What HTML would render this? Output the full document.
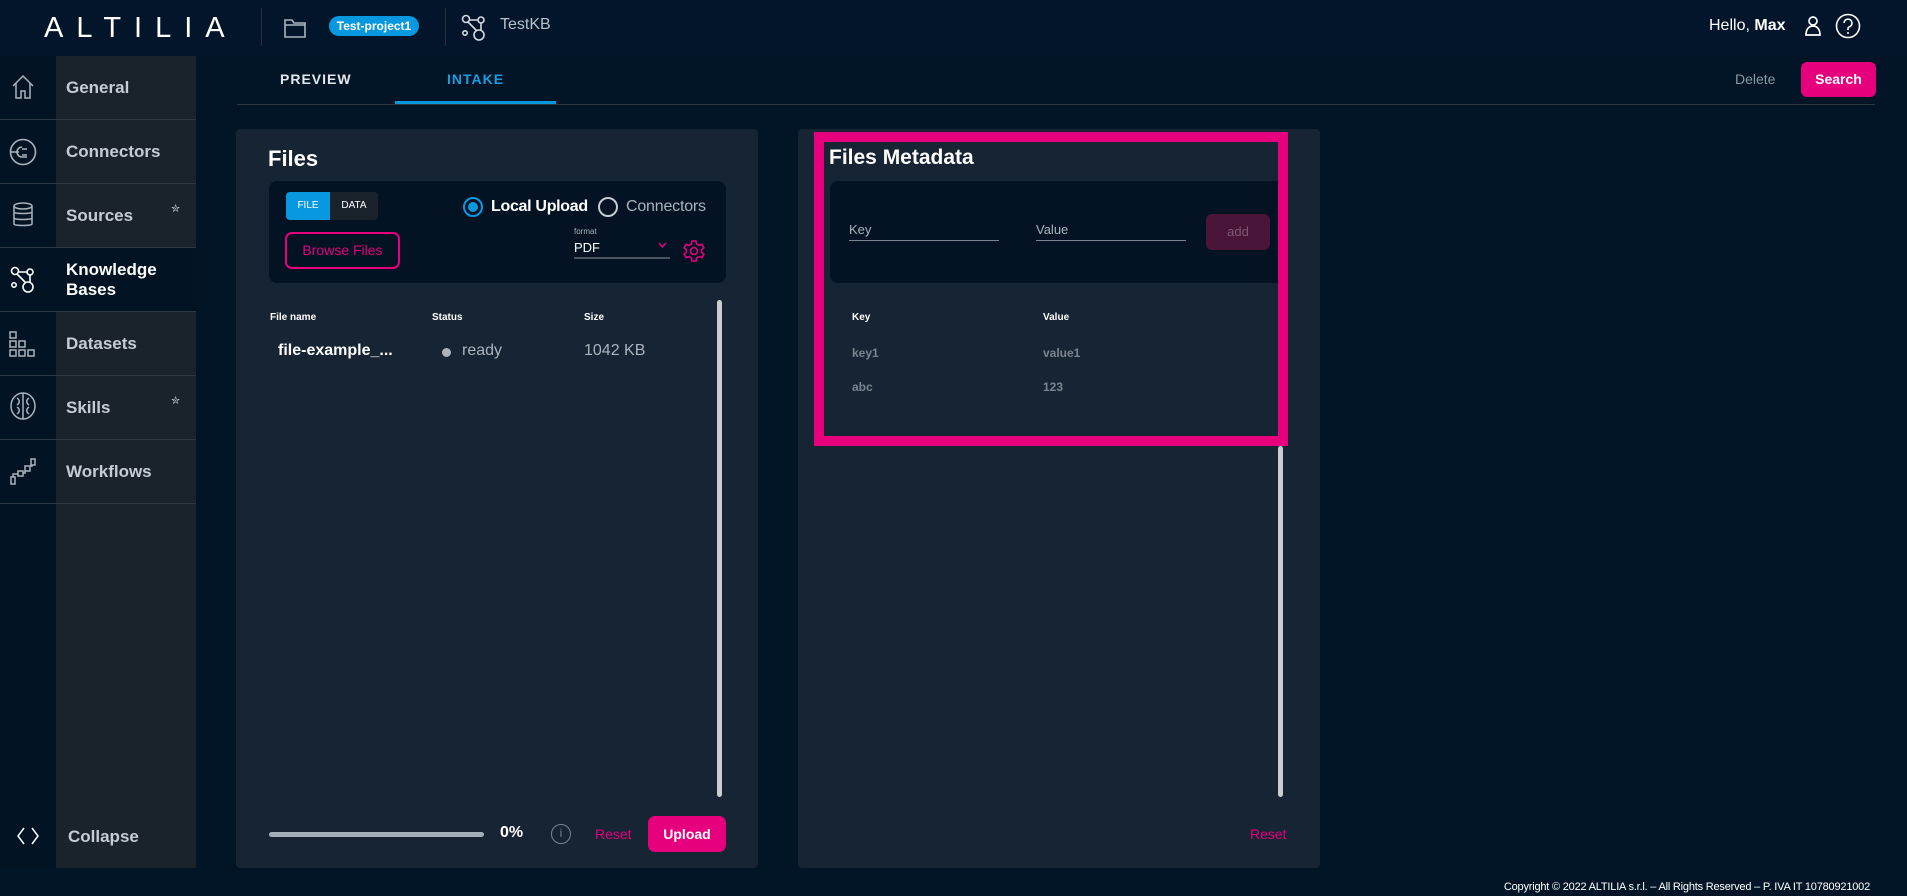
<!DOCTYPE html>
<html><head><meta charset="utf-8"><style>
*{box-sizing:border-box;margin:0;padding:0}
body{width:1907px;height:896px;background:#021526;font-family:"Liberation Sans",sans-serif;color:#fff;position:relative;overflow:hidden}
.a{position:absolute}
.top{left:0;top:0;width:1907px;height:56px;background:#03152a}
.lbl{color:#c5ccd3;font-size:17px;font-weight:bold}
.row{left:0;width:196px;height:64px;border-bottom:1px solid #2d3844}
.panel{background:#172433;border-radius:4px}
.pink{color:#e6007e}
svg{position:absolute}
</style></head><body>
<div class="a top"></div>
<div class="a" style="left:44px;top:12px;font-size:29px;letter-spacing:13px;font-weight:300;color:#fff">ALTILIA</div>
<div class="a" style="left:261px;top:8px;width:1px;height:38px;background:#26333f"></div>
<svg style="left:283px;top:17px" width="24" height="22" viewBox="0 0 24 22"><path d="M2 3h7l2 3h11v14H2z M2 8h20" fill="none" stroke="#aab3bc" stroke-width="1.6"/></svg>
<div class="a" style="left:329px;top:16px;width:90px;height:20px;border-radius:10px;background:#0898e0;font-size:12px;font-weight:bold;text-align:center;line-height:20px">Test-project1</div>
<div class="a" style="left:445px;top:8px;width:1px;height:38px;background:#26333f"></div>
<svg style="left:461px;top:14px" width="26" height="28" viewBox="0 0 26 28"><g fill="none" stroke="#d6dbe0" stroke-width="1.6"><circle cx="5" cy="5" r="3.5"/><circle cx="20" cy="6" r="3"/><circle cx="4" cy="19" r="2.2"/><circle cx="18" cy="21" r="5"/><path d="M8 6h9M7 8l9 9M20 9v7"/></g></svg>
<div class="a" style="left:500px;top:16px;font-size:16px;color:#b9c1c9">TestKB</div>
<div class="a" style="left:1709px;top:17px;font-size:16px">Hello, <b>Max</b></div>
<svg style="left:1804px;top:15px" width="18" height="22" viewBox="0 0 18 22"><g fill="none" stroke="#fff" stroke-width="1.7"><circle cx="9" cy="6" r="4"/><path d="M2 20c0-6 3-9 7-9s7 3 7 9z"/></g></svg>
<svg style="left:1835px;top:13px" width="26" height="26" viewBox="0 0 26 26"><g fill="none" stroke="#fff" stroke-width="1.6"><circle cx="13" cy="13" r="11.5"/><path d="M9 10a4 4 0 1 1 5 4c-1 .5-1 1-1 3"/></g><circle cx="13" cy="20" r="1" fill="#fff"/></svg>

<div class="a" style="left:0;top:56px;width:56px;height:812px;background:#021324"></div>
<div class="a" style="left:56px;top:56px;width:140px;height:812px;background:#1a222c"></div>
<div class="a row" style="top:56px"><span class="a lbl" style="left:66px;top:22px">General</span></div>
<div class="a row" style="top:120px"><span class="a lbl" style="left:66px;top:22px">Connectors</span></div>
<div class="a row" style="top:184px"><span class="a lbl" style="left:66px;top:22px">Sources</span><span class="a" style="left:171px;top:18px;font-size:11px;color:#c5ccd3">✮</span></div>
<div class="a row" style="top:248px;background:#021324"><span class="a" style="left:66px;top:12px;font-size:17px;font-weight:bold;line-height:20px">Knowledge<br>Bases</span></div>
<div class="a row" style="top:312px"><span class="a lbl" style="left:66px;top:22px">Datasets</span></div>
<div class="a row" style="top:376px"><span class="a lbl" style="left:66px;top:22px">Skills</span><span class="a" style="left:171px;top:18px;font-size:11px;color:#c5ccd3">✮</span></div>
<div class="a row" style="top:440px"><span class="a lbl" style="left:66px;top:22px">Workflows</span></div>
<svg style="left:11px;top:74px" width="24" height="26" viewBox="0 0 24 26"><path d="M2 12L12 2l10 10M5 9v15h5v-7h4v7h5V9" fill="none" stroke="#aab3bc" stroke-width="1.5"/></svg>
<svg style="left:9px;top:138px" width="28" height="28" viewBox="0 0 28 28"><g fill="none" stroke="#aab3bc" stroke-width="1.6"><circle cx="14" cy="14" r="12.5"/><path d="M2 14h8M13 9a5 5 0 0 0 0 10h5M13 11h5M13 17h5"/></g></svg>
<svg style="left:12px;top:202px" width="22" height="26" viewBox="0 0 22 26"><g fill="none" stroke="#aab3bc" stroke-width="1.5"><ellipse cx="11" cy="4" rx="9" ry="3"/><path d="M2 4v18c0 2 18 2 18 0V4M2 10c0 2 18 2 18 0M2 16c0 2 18 2 18 0"/></g></svg>
<svg style="left:10px;top:266px" width="26" height="28" viewBox="0 0 26 28"><g fill="none" stroke="#fff" stroke-width="1.6"><circle cx="5" cy="5" r="3.5"/><circle cx="20" cy="6" r="3"/><circle cx="4" cy="19" r="2.2"/><circle cx="18" cy="21" r="5"/><path d="M8 6h9M7 8l9 9M20 9v7"/></g></svg>
<svg style="left:9px;top:331px" width="28" height="26" viewBox="0 0 28 26"><g fill="none" stroke="#aab3bc" stroke-width="1.5"><rect x="1" y="1" width="6" height="6"/><rect x="1" y="10" width="6" height="6"/><rect x="10" y="10" width="6" height="6"/><rect x="1" y="19" width="6" height="6"/><rect x="10" y="19" width="6" height="6"/><rect x="19" y="19" width="6" height="6"/></g></svg>
<svg style="left:10px;top:392px" width="26" height="28" viewBox="0 0 26 28"><g fill="none" stroke="#aab3bc" stroke-width="1.5"><ellipse cx="13" cy="14" rx="12" ry="13"/><path d="M13 1v26M7 6c3 2 3 5 0 7M19 6c-3 2-3 5 0 7M7 15c3 2 3 5 0 7M19 15c-3 2-3 5 0 7"/></g></svg>
<svg style="left:10px;top:458px" width="26" height="28" viewBox="0 0 26 28"><g fill="none" stroke="#aab3bc" stroke-width="1.5"><rect x="1" y="19" width="4" height="7"/><rect x="8" y="13" width="5" height="5"/><rect x="15" y="8" width="5" height="5"/><rect x="21" y="1" width="4" height="6"/><path d="M3 19v-3h5M13 15h2v-2M20 8h2V7"/></g></svg>
<svg style="left:16px;top:826px" width="24" height="20" viewBox="0 0 24 20"><path d="M8 2L2 10l6 8M16 2l6 8-6 8" fill="none" stroke="#fff" stroke-width="1.5"/></svg>
<div class="a lbl" style="left:68px;top:827px">Collapse</div>

<div class="a" style="left:280px;top:71px;font-size:14px;letter-spacing:1px;font-weight:bold;color:#e3e7eb">PREVIEW</div>
<div class="a" style="left:447px;top:71px;font-size:14px;letter-spacing:1px;font-weight:bold;color:#1a9de0">INTAKE</div>
<div class="a" style="left:237px;top:104px;width:1638px;height:1px;background:#2a3642"></div>
<div class="a" style="left:395px;top:101px;width:161px;height:3px;background:#0898e0"></div>
<div class="a" style="left:1735px;top:71px;font-size:14px;color:#8b96a2">Delete</div>
<div class="a" style="left:1801px;top:62px;width:75px;height:35px;border-radius:6px;background:#e6007e;font-size:14px;font-weight:bold;text-align:center;line-height:35px">Search</div>

<div class="a panel" style="left:236px;top:129px;width:522px;height:739px"></div>
<div class="a" style="left:268px;top:146px;font-size:22px;font-weight:bold">Files</div>
<div class="a" style="left:269px;top:181px;width:457px;height:102px;background:#031324;border-radius:8px"></div>
<div class="a" style="left:286px;top:192px;width:44px;height:28px;background:#0898e0;border-radius:4px 0 0 4px;font-size:10px;text-align:center;line-height:28px">FILE</div>
<div class="a" style="left:330px;top:192px;width:48px;height:28px;background:#1a222c;border-radius:0 4px 4px 0;font-size:10px;text-align:center;line-height:28px">DATA</div>
<div class="a" style="left:285px;top:232px;width:115px;height:37px;border:2px solid #e6007e;border-radius:7px;color:#e6007e;font-size:14px;text-align:center;line-height:33px">Browse Files</div>
<div class="a" style="left:463px;top:197px;width:20px;height:20px;border:2px solid #0898e0;border-radius:50%"><div style="margin:3px;width:10px;height:10px;border-radius:50%;background:#0898e0"></div></div>
<div class="a" style="left:491px;top:198px;font-size:16px;font-weight:bold;letter-spacing:-0.3px">Local Upload</div>
<div class="a" style="left:598px;top:197px;width:20px;height:20px;border:2px solid #c5ccd3;border-radius:50%"></div>
<div class="a" style="left:626px;top:198px;font-size:16px;color:#aab3bc;letter-spacing:-0.2px">Connectors</div>
<div class="a" style="left:574px;top:227px;font-size:8px;color:#aab3bc">format</div>
<div class="a" style="left:574px;top:240px;font-size:13px">PDF</div>
<svg style="left:658px;top:242px" width="9" height="6" viewBox="0 0 9 6"><path d="M1 1l3.5 4L8 1" fill="none" stroke="#e6007e" stroke-width="1.4"/></svg>
<div class="a" style="left:574px;top:257px;width:96px;height:2px;background:#4a5560"></div>
<svg style="left:682px;top:239px" width="24" height="24" viewBox="0 0 24 24"><g fill="none" stroke="#e6007e" stroke-width="1.6"><circle cx="12" cy="12" r="3.5"/><path d="M10 2h4l.6 3 2.4 1.4 2.9-1 2 3.4-2.3 2v2.4l2.3 2-2 3.4-2.9-1L14.6 19 14 22h-4l-.6-3L7 17.6l-2.9 1-2-3.4 2.3-2v-2.4l-2.3-2 2-3.4 2.9 1L9.4 5z"/></g></svg>
<div class="a" style="left:270px;top:312px;font-size:10px;font-weight:bold">File name</div>
<div class="a" style="left:432px;top:312px;font-size:10px;font-weight:bold">Status</div>
<div class="a" style="left:584px;top:312px;font-size:10px;font-weight:bold">Size</div>
<div class="a" style="left:278px;top:342px;font-size:16px;font-weight:bold">file-example_...</div>
<div class="a" style="left:442px;top:348px;width:9px;height:9px;border-radius:50%;background:#aab3bc"></div>
<div class="a" style="left:462px;top:342px;font-size:16px;color:#aab3bc">ready</div>
<div class="a" style="left:584px;top:342px;font-size:16px;color:#aab3bc">1042 KB</div>
<div class="a" style="left:717px;top:300px;width:5px;height:497px;border-radius:3px;background:#c8cdd2"></div>
<div class="a" style="left:269px;top:832px;width:215px;height:5px;border-radius:3px;background:#a3b0ba"></div>
<div class="a" style="left:500px;top:824px;font-size:16px;font-weight:bold">0%</div>
<div class="a" style="left:551px;top:824px;width:20px;height:20px;border:1.5px solid #7a848e;border-radius:50%;color:#7a848e;font-size:12px;text-align:center;line-height:17px">i</div>
<div class="a pink" style="left:595px;top:826px;font-size:14px">Reset</div>
<div class="a" style="left:648px;top:816px;width:78px;height:36px;border-radius:7px;background:#e6007e;font-size:14px;font-weight:bold;text-align:center;line-height:36px">Upload</div>

<div class="a panel" style="left:798px;top:129px;width:522px;height:739px"></div>
<div class="a" style="left:830px;top:181px;width:448px;height:102px;background:#031324;border-radius:8px 0 0 8px"></div>
<div class="a" style="left:829px;top:146px;font-size:21px;font-weight:bold">Files Metadata</div>
<div class="a" style="left:849px;top:222px;font-size:13px;color:#aab3bc">Key</div>
<div class="a" style="left:849px;top:240px;width:150px;height:1px;background:#7a848e"></div>
<div class="a" style="left:1036px;top:222px;font-size:13px;color:#aab3bc">Value</div>
<div class="a" style="left:1036px;top:240px;width:150px;height:1px;background:#7a848e"></div>
<div class="a" style="left:1206px;top:214px;width:64px;height:36px;border-radius:6px;background:#4a1438;color:#7e5a72;font-size:13px;text-align:center;line-height:36px">add</div>
<div class="a" style="left:852px;top:312px;font-size:10px;font-weight:bold">Key</div>
<div class="a" style="left:1043px;top:312px;font-size:10px;font-weight:bold">Value</div>
<div class="a" style="left:852px;top:346px;font-size:12px;font-weight:bold;color:#7a848e">key1</div>
<div class="a" style="left:1043px;top:346px;font-size:12px;font-weight:bold;color:#7a848e">value1</div>
<div class="a" style="left:852px;top:380px;font-size:12px;font-weight:bold;color:#7a848e">abc</div>
<div class="a" style="left:1043px;top:380px;font-size:12px;font-weight:bold;color:#7a848e">123</div>
<div class="a" style="left:814px;top:132px;width:474px;height:314px;border:10px solid #e6007e"></div>
<div class="a" style="left:1278px;top:446px;width:5px;height:351px;border-radius:3px;background:#c8cdd2"></div>
<div class="a pink" style="left:1250px;top:826px;font-size:14px">Reset</div>

<div class="a" style="right:37px;top:881px;font-size:11px;letter-spacing:-0.2px;color:#fff">Copyright © 2022 ALTILIA s.r.l. – All Rights Reserved – P. IVA IT 10780921002</div>
</body></html>
